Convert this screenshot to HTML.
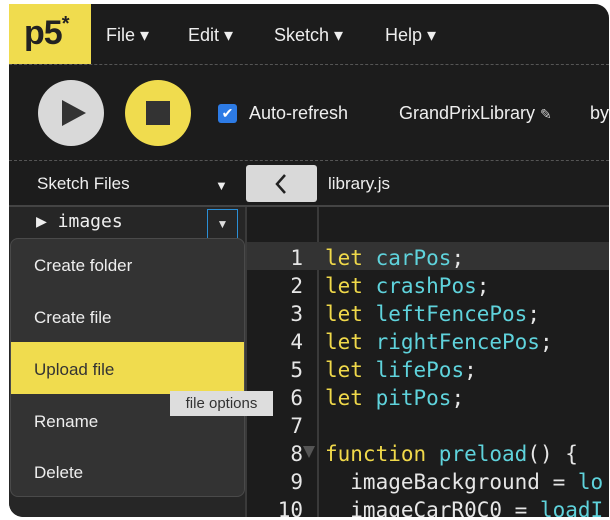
<!DOCTYPE html><html><head><style>
*{margin:0;padding:0;box-sizing:border-box}
body{width:610px;height:520px;background:#fff;position:relative;overflow:hidden;font-family:"Liberation Sans",sans-serif}
#app{position:absolute;left:9px;top:4px;width:600px;height:513px;background:#1c1c1c;border-radius:0 14px 0 14px;overflow:hidden}
.a{position:absolute}
.nav{color:#eee;font-size:18px}
.mono{font-family:"DejaVu Sans Mono","Liberation Mono",monospace}
.dash{border-top:1.5px dashed #555;height:0;left:0;width:600px}
.ln{color:#e6e6e6;font-size:21px;width:58px;text-align:right;left:236px}
.code{font-size:21px;left:316px;color:#5fd3dc;white-space:pre}
.k{color:#f0d94a}
.w{color:#e6e6e6}
.mi{left:23px;color:#eee;font-size:17px}
</style></head><body>
<div id="app">
<div class="a" style="left:0;top:0;width:82px;height:60px;background:#f0dc4e"></div>
<div class="a" style="left:15px;top:10px;font-size:34px;color:#222;font-weight:bold;letter-spacing:-1px">p5<span style="font-size:20px;position:relative;top:-14px">*</span></div>
<div class="a nav" style="left:97px;top:21px">File ▾</div>
<div class="a nav" style="left:179px;top:21px">Edit ▾</div>
<div class="a nav" style="left:265px;top:21px">Sketch ▾</div>
<div class="a nav" style="left:376px;top:21px">Help ▾</div>
<div class="a dash" style="top:60px"></div>
<div class="a" style="left:29px;top:76px;width:66px;height:66px;border-radius:50%;background:#d9d9d9"></div>
<div class="a" style="left:53px;top:96px;width:0;height:0;border-left:24px solid #333;border-top:13px solid transparent;border-bottom:13px solid transparent"></div>
<div class="a" style="left:116px;top:76px;width:66px;height:66px;border-radius:50%;background:#f0dc4e"></div>
<div class="a" style="left:137px;top:97px;width:24px;height:24px;background:#333"></div>
<div class="a" style="left:209px;top:100px;width:19px;height:19px;border-radius:3px;background:#2d7be5;color:#fff;font-size:14px;text-align:center;line-height:19px">✔</div>
<div class="a nav" style="left:240px;top:99px">Auto-refresh</div>
<div class="a nav" style="left:390px;top:99px">GrandPrixLibrary <span style="font-size:14px;color:#ccc">✎</span></div>
<div class="a nav" style="left:581px;top:99px">by</div>
<div class="a dash" style="top:156px"></div>
<div class="a nav" style="left:28px;top:170px;font-size:17px">Sketch Files</div>
<div class="a" style="left:206px;top:174px;color:#eee;font-size:13px">▼</div>
<div class="a" style="left:237px;top:161px;width:71px;height:37px;background:#d9d9d9;border-radius:3px"></div>
<svg class="a" style="left:262px;top:168px" width="20" height="24"><path d="M14 3 L6 12 L14 21" stroke="#222" stroke-width="2.5" fill="none"/></svg>
<div class="a nav" style="left:319px;top:170px;font-size:17px">library.js</div>
<div class="a" style="left:0;top:201px;width:600px;height:2px;background:#444"></div>
<div class="a" style="left:0;top:203px;width:236px;height:320px;background:#262626"></div>
<div class="a" style="left:236px;top:203px;width:2px;height:320px;background:#3a3a3a"></div>
<div class="a" style="left:308px;top:203px;width:2px;height:320px;background:#3a3a3a"></div>
<div class="a" style="left:238px;top:238px;width:362px;height:28px;background:#333"></div>
<div class="a mono" style="left:27px;top:207px;color:#eee;font-size:18px">▶ images</div>
<div class="a" style="left:198px;top:205px;width:31px;height:31px;border:1.5px solid #2b8fd6;color:#ddd;font-size:12px;text-align:center;line-height:28px">▼</div>
<div class="a mono ln" style="top:240px;line-height:28px">1<br>2<br>3<br>4<br>5<br>6<br>7<br>8<br>9<br>10</div>
<div class="a" style="left:294px;top:442px;width:0;height:0;border-top:12px solid #555;border-left:6px solid transparent;border-right:6px solid transparent"></div>
<div class="a mono code" style="top:240px;line-height:28px"><span class="k">let</span> carPos<span class="w">;</span>
<span class="k">let</span> crashPos<span class="w">;</span>
<span class="k">let</span> leftFencePos<span class="w">;</span>
<span class="k">let</span> rightFencePos<span class="w">;</span>
<span class="k">let</span> lifePos<span class="w">;</span>
<span class="k">let</span> pitPos<span class="w">;</span>

<span class="k">function</span> preload<span class="w">() {</span>
<span class="w">  imageBackground =</span> lo
<span class="w">  imageCarR0C0 =</span> loadI</div>
<div class="a" style="left:1px;top:234px;width:235px;height:259px;background:#333;border:1px solid #4a4a4a;border-radius:8px;overflow:hidden">
<div class="a" style="left:0;top:103px;width:235px;height:52px;background:#f0dc4e"></div>
<div class="a mi" style="top:17px">Create folder</div>
<div class="a mi" style="top:69px">Create file</div>
<div class="a mi" style="top:121px;color:#333">Upload file</div>
<div class="a mi" style="top:173px">Rename</div>
<div class="a mi" style="top:224px">Delete</div>
</div>
<div class="a" style="left:161px;top:387px;width:103px;height:25px;background:#ddd;color:#333;font-size:15px;text-align:center;line-height:25px">file options</div>
</div>
</body></html>
